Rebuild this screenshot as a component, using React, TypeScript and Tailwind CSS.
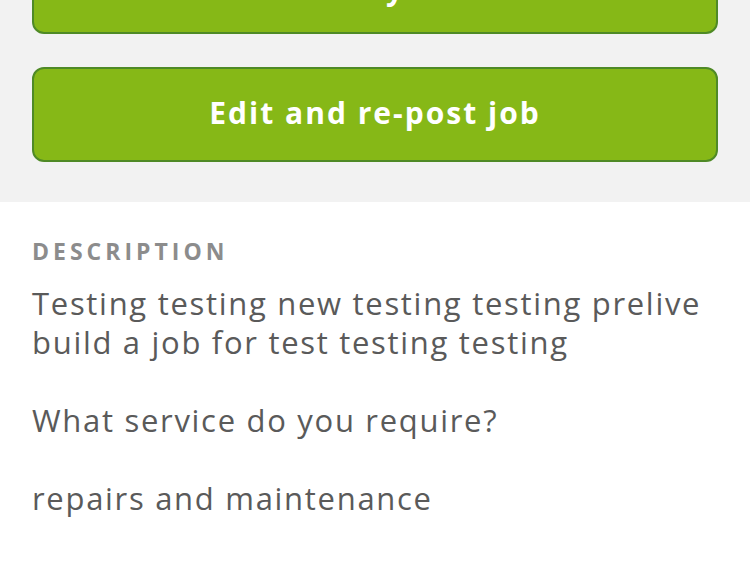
import React from "react";

const font = { fontFamily: '"Open Sans", "Noto Sans", sans-serif' };

export default function App() {
  const lines = [
    "Testing testing new testing testing prelive",
    "build a job for test testing testing",
    "",
    "What service do you require?",
    "",
    "repairs and maintenance",
  ];
  return (
    <div className="w-[750px] h-[562px] overflow-hidden bg-white" style={font}>
      <div className="bg-[#f2f2f2] px-[32px] pb-[40px] flex flex-col gap-[33px] -mt-[61px]">
        <button className="h-[95px] w-full rounded-[12px] border-2 border-[#4f8a26] bg-[#86b817] text-white font-bold text-[30px] tracking-[2px] pt-[4px]">
          Pay
        </button>
        <button className="h-[95px] w-full rounded-[12px] border-2 border-[#4f8a26] bg-[#86b817] text-white font-bold text-[30px] tracking-[2px] pb-[4px]">
          Edit and re-post job
        </button>
      </div>
      <div className="px-[32px] pt-[34px]">
        <div className="text-[23px] font-bold tracking-[4px] text-[#8c8c8c] leading-[30px]">
          DESCRIPTION
        </div>
        <div className="mt-[18px] text-[31px] tracking-[1.7px] leading-[39px] text-[#5a5a5a] whitespace-nowrap">
          {lines.map((l, i) => (
            <p key={i} className="h-[39px]">
              {l}
            </p>
          ))}
        </div>
      </div>
    </div>
  );
}
